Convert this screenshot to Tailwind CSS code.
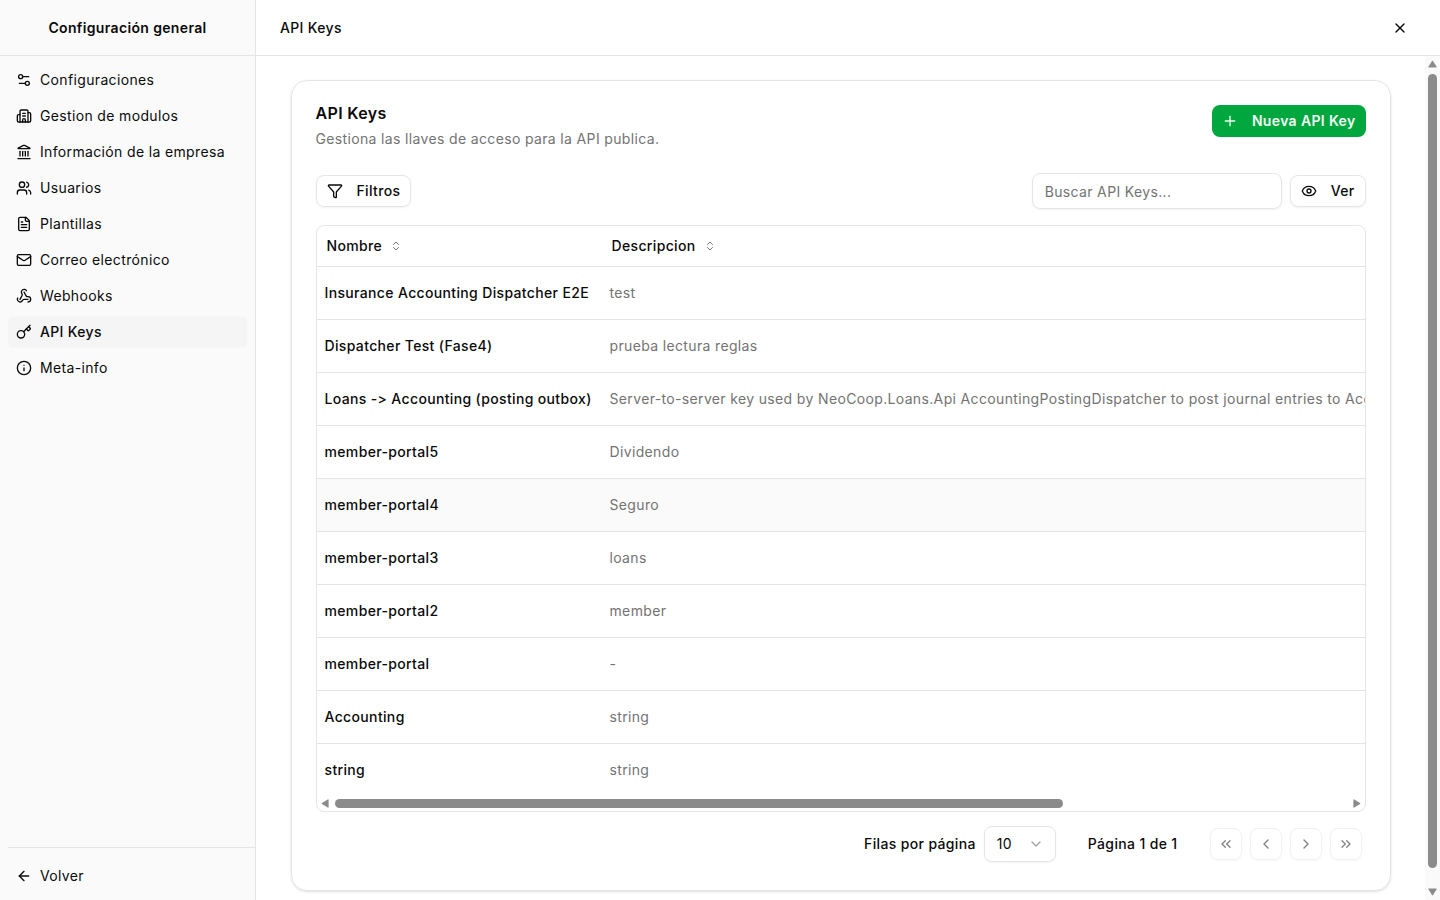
<!DOCTYPE html>
<html lang="es">
<head>
    <meta charset="UTF-8">
    <meta name="viewport" content="width=device-width, initial-scale=1.0">
    <title>API Keys - Configuración general</title>
    <script src="https://cdn.jsdelivr.net/npm/@tailwindcss/browser@4"></script>
</head>
<body class="h-screen flex overflow-hidden bg-white text-neutral-950 text-sm font-['Inter',sans-serif] tracking-wide">
  <!-- Sidebar -->
  <aside class="w-64 shrink-0 flex flex-col border-r border-neutral-200 bg-neutral-50">
    <div class="h-14 shrink-0 flex items-center justify-center border-b border-neutral-200">
      <h2 class="font-semibold">Configuración general</h2>
    </div>
    <nav class="flex-1 flex flex-col gap-1 p-2">
      <a href="#" class="h-8 flex items-center gap-2 px-2 rounded-md">
        <svg class="size-4" viewBox="0 0 24 24" fill="none" stroke="currentColor" stroke-width="2" stroke-linecap="round" stroke-linejoin="round"><path d="M14 17H5"/><path d="M19 7h-9"/><circle cx="17" cy="17" r="3"/><circle cx="7" cy="7" r="3"/></svg>
        <span>Configuraciones</span>
      </a>
      <a href="#" class="h-8 flex items-center gap-2 px-2 rounded-md">
        <svg class="size-4" viewBox="0 0 24 24" fill="none" stroke="currentColor" stroke-width="2" stroke-linecap="round" stroke-linejoin="round"><path d="M10 12h4"/><path d="M10 8h4"/><path d="M14 21v-3a2 2 0 0 0-4 0v3"/><path d="M6 10H4a2 2 0 0 0-2 2v7a2 2 0 0 0 2 2h16a2 2 0 0 0 2-2V9a2 2 0 0 0-2-2h-2"/><path d="M6 21V5a2 2 0 0 1 2-2h8a2 2 0 0 1 2 2v16"/></svg>
        <span>Gestion de modulos</span>
      </a>
      <a href="#" class="h-8 flex items-center gap-2 px-2 rounded-md">
        <svg class="size-4" viewBox="0 0 24 24" fill="none" stroke="currentColor" stroke-width="2" stroke-linecap="round" stroke-linejoin="round"><path d="M10 18v-7"/><path d="M11.12 2.198a2 2 0 0 1 1.76.006l7.866 3.847c.476.233.31.949-.22.949H3.474c-.53 0-.695-.716-.22-.949z"/><path d="M14 18v-7"/><path d="M18 18v-7"/><path d="M3 22h18"/><path d="M6 18v-7"/></svg>
        <span>Información de la empresa</span>
      </a>
      <a href="#" class="h-8 flex items-center gap-2 px-2 rounded-md">
        <svg class="size-4" viewBox="0 0 24 24" fill="none" stroke="currentColor" stroke-width="2" stroke-linecap="round" stroke-linejoin="round"><path d="M16 21v-2a4 4 0 0 0-4-4H6a4 4 0 0 0-4 4v2"/><path d="M16 3.128a4 4 0 0 1 0 7.744"/><path d="M22 21v-2a4 4 0 0 0-3-3.870"/><circle cx="9" cy="7" r="4"/></svg>
        <span>Usuarios</span>
      </a>
      <a href="#" class="h-8 flex items-center gap-2 px-2 rounded-md">
        <svg class="size-4" viewBox="0 0 24 24" fill="none" stroke="currentColor" stroke-width="2" stroke-linecap="round" stroke-linejoin="round"><path d="M15 2H6a2 2 0 0 0-2 2v16a2 2 0 0 0 2 2h12a2 2 0 0 0 2-2V7Z"/><path d="M14 2v4a2 2 0 0 0 2 2h4"/><path d="M10 9H8"/><path d="M16 13H8"/><path d="M16 17H8"/></svg>
        <span>Plantillas</span>
      </a>
      <a href="#" class="h-8 flex items-center gap-2 px-2 rounded-md">
        <svg class="size-4" viewBox="0 0 24 24" fill="none" stroke="currentColor" stroke-width="2" stroke-linecap="round" stroke-linejoin="round"><path d="m22 7-8.991 5.727a2 2 0 0 1-2.009 0L2 7"/><rect x="2" y="4" width="20" height="16" rx="2"/></svg>
        <span>Correo electrónico</span>
      </a>
      <a href="#" class="h-8 flex items-center gap-2 px-2 rounded-md">
        <svg class="size-4" viewBox="0 0 24 24" fill="none" stroke="currentColor" stroke-width="2" stroke-linecap="round" stroke-linejoin="round"><path d="M18 16.98h-5.99c-1.1 0-1.95.94-2.48 1.9A4 4 0 0 1 2 17c.01-.7.2-1.4.57-2"/><path d="m6 17 3.13-5.78c.53-.97.1-2.18-.5-3.1a4 4 0 1 1 6.89-4.06"/><path d="m12 6 3.13 5.73C15.66 12.7 16.9 13 18 13a4 4 0 0 1 0 8"/></svg>
        <span>Webhooks</span>
      </a>
      <a href="#" aria-current="page" class="h-8 flex items-center gap-2 px-2 rounded-md bg-neutral-100 font-medium">
        <svg class="size-4" viewBox="0 0 24 24" fill="none" stroke="currentColor" stroke-width="2" stroke-linecap="round" stroke-linejoin="round"><path d="m15.5 7.5 2.3 2.3a1 1 0 0 0 1.4 0l2.1-2.1a1 1 0 0 0 0-1.4L19 4"/><path d="m21 2-9.6 9.6"/><circle cx="7.5" cy="15.5" r="5.5"/></svg>
        <span>API Keys</span>
      </a>
      <a href="#" class="h-8 flex items-center gap-2 px-2 rounded-md">
        <svg class="size-4" viewBox="0 0 24 24" fill="none" stroke="currentColor" stroke-width="2" stroke-linecap="round" stroke-linejoin="round"><circle cx="12" cy="12" r="10"/><path d="M12 16v-4"/><path d="M12 8h.01"/></svg>
        <span>Meta-info</span>
      </a>
    </nav>
    <div class="ml-2 border-t border-neutral-200 pt-3 pb-2 pr-2">
      <a href="#" class="h-8 flex items-center gap-2 px-2 rounded-md">
        <svg class="size-4" viewBox="0 0 24 24" fill="none" stroke="currentColor" stroke-width="2" stroke-linecap="round" stroke-linejoin="round"><path d="m12 19-7-7 7-7"/><path d="M19 12H5"/></svg>
        <span>Volver</span>
      </a>
    </div>
  </aside>

  <div class="flex-1 min-w-0 flex flex-col">
    <header class="h-14 shrink-0 flex items-center justify-between border-b border-neutral-200 px-6">
      <h1 class="font-medium">API Keys</h1>
      <button type="button" aria-label="Cerrar" class="size-8 flex items-center justify-center rounded-md">
        <svg class="size-4" viewBox="0 0 24 24" fill="none" stroke="currentColor" stroke-width="2" stroke-linecap="round" stroke-linejoin="round"><path d="M18 6 6 18"/><path d="m6 6 12 12"/></svg>
      </button>
    </header>

    <div class="flex-1 min-h-0 flex">
      <main class="flex-1 min-w-0 overflow-hidden px-6 pt-6">
        <section class="mx-auto max-w-[1100px] rounded-2xl border border-neutral-200 p-6 pb-7 shadow-sm">
          <div class="flex items-start justify-between">
            <div class="space-y-2">
              <h2 class="text-base leading-4 font-semibold">API Keys</h2>
              <p class="text-neutral-500">Gestiona las llaves de acceso para la API publica.</p>
            </div>
            <button type="button" class="h-8 flex items-center gap-3.5 rounded-lg bg-[#00a63e] px-2.5 font-semibold text-green-50">
              <svg class="size-4" viewBox="0 0 24 24" fill="none" stroke="currentColor" stroke-width="2" stroke-linecap="round" stroke-linejoin="round"><path d="M5 12h14"/><path d="M12 5v14"/></svg>
              Nueva API Key
            </button>
          </div>

          <div class="mt-6 flex items-center gap-2">
            <button type="button" class="h-8 flex items-center gap-3.5 rounded-lg border border-neutral-200 px-2.5 font-medium shadow-xs">
              <svg class="size-4" viewBox="0 0 24 24" fill="none" stroke="currentColor" stroke-width="2" stroke-linecap="round" stroke-linejoin="round"><path d="M10 20a1 1 0 0 0 .553.895l2 1A1 1 0 0 0 14 21v-7a2 2 0 0 1 .517-1.341L21.74 4.67A1 1 0 0 0 21 3H3a1 1 0 0 0-.742 1.67l7.225 7.989A2 2 0 0 1 10 14z"/></svg>
              Filtros
            </button>
            <input type="search" aria-label="Buscar API Keys" placeholder="Buscar API Keys..." class="ml-auto h-9 w-[250px] rounded-lg border border-neutral-200 px-3 tracking-wide shadow-xs placeholder:text-neutral-500">
            <button type="button" class="h-8 flex items-center gap-3.5 rounded-lg border border-neutral-200 px-2.5 font-medium shadow-xs">
              <svg class="size-4" viewBox="0 0 24 24" fill="none" stroke="currentColor" stroke-width="2" stroke-linecap="round" stroke-linejoin="round"><path d="M2.062 12.348a1 1 0 0 1 0-.696 10.75 10.75 0 0 1 19.876 0 1 1 0 0 1 0 .696 10.75 10.75 0 0 1-19.876 0"/><circle cx="12" cy="12" r="3"/></svg>
              Ver
            </button>
          </div>

          <div class="mt-4 overflow-hidden rounded-lg border border-neutral-200">
            <div class="overflow-hidden">
              <table class="w-[1466px] table-fixed text-left whitespace-nowrap">
                <colgroup><col class="w-[285px]"><col></colgroup>
                <thead>
                  <tr class="h-10 border-b border-neutral-200">
                    <th class="px-2.5 font-medium">
                      <button type="button" class="flex items-center gap-2">Nombre
                        <svg class="size-3 text-neutral-500" viewBox="0 0 24 24" fill="none" stroke="currentColor" stroke-width="2" stroke-linecap="round" stroke-linejoin="round"><path d="m7 15 5 5 5-5"/><path d="m7 9 5-5 5 5"/></svg>
                      </button>
                    </th>
                    <th class="px-2.5 font-medium">
                      <button type="button" class="flex items-center gap-2">Descripcion
                        <svg class="size-3 text-neutral-500" viewBox="0 0 24 24" fill="none" stroke="currentColor" stroke-width="2" stroke-linecap="round" stroke-linejoin="round"><path d="m7 15 5 5 5-5"/><path d="m7 9 5-5 5 5"/></svg>
                      </button>
                    </th>
                  </tr>
                </thead>
                <tbody class="divide-y divide-neutral-200 text-neutral-500">
                  <tr class="h-[53px]"><td class="px-2 font-medium text-neutral-950">Insurance Accounting Dispatcher E2E</td><td class="px-2">test</td></tr>
                  <tr class="h-[53px]"><td class="px-2 font-medium text-neutral-950">Dispatcher Test (Fase4)</td><td class="px-2">prueba lectura reglas</td></tr>
                  <tr class="h-[53px]"><td class="px-2 font-medium text-neutral-950">Loans -&gt; Accounting (posting outbox)</td><td class="px-2">Server-to-server key used by NeoCoop.Loans.Api AccountingPostingDispatcher to post journal entries to Accounting</td></tr>
                  <tr class="h-[53px]"><td class="px-2 font-medium text-neutral-950">member-portal5</td><td class="px-2">Dividendo</td></tr>
                  <tr class="h-[53px] bg-neutral-50"><td class="px-2 font-medium text-neutral-950">member-portal4</td><td class="px-2">Seguro</td></tr>
                  <tr class="h-[53px]"><td class="px-2 font-medium text-neutral-950">member-portal3</td><td class="px-2">loans</td></tr>
                  <tr class="h-[53px]"><td class="px-2 font-medium text-neutral-950">member-portal2</td><td class="px-2">member</td></tr>
                  <tr class="h-[53px]"><td class="px-2 font-medium text-neutral-950">member-portal</td><td class="px-2">-</td></tr>
                  <tr class="h-[53px]"><td class="px-2 font-medium text-neutral-950">Accounting</td><td class="px-2">string</td></tr>
                  <tr class="h-[53px]"><td class="px-2 font-medium text-neutral-950">string</td><td class="px-2">string</td></tr>
                </tbody>
              </table>
            </div>
            <!-- Horizontal scrollbar -->
            <div class="h-[15px] flex items-center gap-1.5 px-1 text-[#8b8b8b]">
              <svg class="w-2 h-[9px]" viewBox="0 0 8 10" fill="currentColor"><path d="M7 .5Q8 0 8 1v8q0 1-1 .5L.6 5.600Q0 5 .6 4.400z"/></svg>
              <div class="flex-1 h-[9px]"><div class="h-full w-[72%] rounded-full bg-[#8b8b8b]"></div></div>
              <svg class="w-2 h-[9px]" viewBox="0 0 8 10" fill="currentColor"><path d="M1 .5Q0 0 0 1v8q0 1 1 .5l6.400-3.900Q8 5 7.400 4.400z"/></svg>
            </div>
          </div>

          <div class="mt-3.5 flex items-center justify-end pr-1 font-medium">
            <label for="rows" class="mr-2">Filas por página</label>
            <div class="relative">
              <select id="rows" class="h-9 w-[72px] appearance-none rounded-lg border border-neutral-200 px-3 font-normal tracking-wide shadow-xs"><option>10</option><option>20</option><option>50</option></select>
              <svg class="pointer-events-none absolute right-3 top-2.5 size-4 text-neutral-400" viewBox="0 0 24 24" fill="none" stroke="currentColor" stroke-width="2" stroke-linecap="round" stroke-linejoin="round"><path d="m6 9 6 6 6-6"/></svg>
            </div>
            <span class="mx-8">Página 1 de 1</span>
            <div class="flex gap-2">
              <button type="button" disabled aria-label="Primera página" class="size-8 flex items-center justify-center rounded-lg border border-neutral-200 opacity-50 shadow-xs"><svg class="size-4" viewBox="0 0 24 24" fill="none" stroke="currentColor" stroke-width="2" stroke-linecap="round" stroke-linejoin="round"><path d="m11 17-5-5 5-5"/><path d="m18 17-5-5 5-5"/></svg></button>
              <button type="button" disabled aria-label="Página anterior" class="size-8 flex items-center justify-center rounded-lg border border-neutral-200 opacity-50 shadow-xs"><svg class="size-4" viewBox="0 0 24 24" fill="none" stroke="currentColor" stroke-width="2" stroke-linecap="round" stroke-linejoin="round"><path d="m15 18-6-6 6-6"/></svg></button>
              <button type="button" disabled aria-label="Página siguiente" class="size-8 flex items-center justify-center rounded-lg border border-neutral-200 opacity-50 shadow-xs"><svg class="size-4" viewBox="0 0 24 24" fill="none" stroke="currentColor" stroke-width="2" stroke-linecap="round" stroke-linejoin="round"><path d="m9 18 6-6-6-6"/></svg></button>
              <button type="button" disabled aria-label="Última página" class="size-8 flex items-center justify-center rounded-lg border border-neutral-200 opacity-50 shadow-xs"><svg class="size-4" viewBox="0 0 24 24" fill="none" stroke="currentColor" stroke-width="2" stroke-linecap="round" stroke-linejoin="round"><path d="m6 17 5-5-5-5"/><path d="m13 17 5-5-5-5"/></svg></button>
            </div>
          </div>
        </section>
      </main>
      <!-- Vertical scrollbar -->
      <div class="w-[15px] shrink-0 flex flex-col items-center gap-1.5 bg-neutral-50 py-1 text-[#8b8b8b]">
        <svg class="w-[9px] h-2 shrink-0" viewBox="0 0 10 8" fill="currentColor"><path d="M.5 7Q0 8 1 8h8q1 0 .5-1L5.600.6Q5 0 4.400.6z"/></svg>
        <div class="flex-1 w-[9px] pb-3.5"><div class="h-full rounded-full bg-[#8b8b8b]"></div></div>
        <svg class="w-[9px] h-2 shrink-0" viewBox="0 0 10 8" fill="currentColor"><path d="M.5 1Q0 0 1 0h8q1 0 .5 1L5.600 7.400Q5 8 4.400 7.400z"/></svg>
      </div>
    </div>
  </div>
</body>
</html>
